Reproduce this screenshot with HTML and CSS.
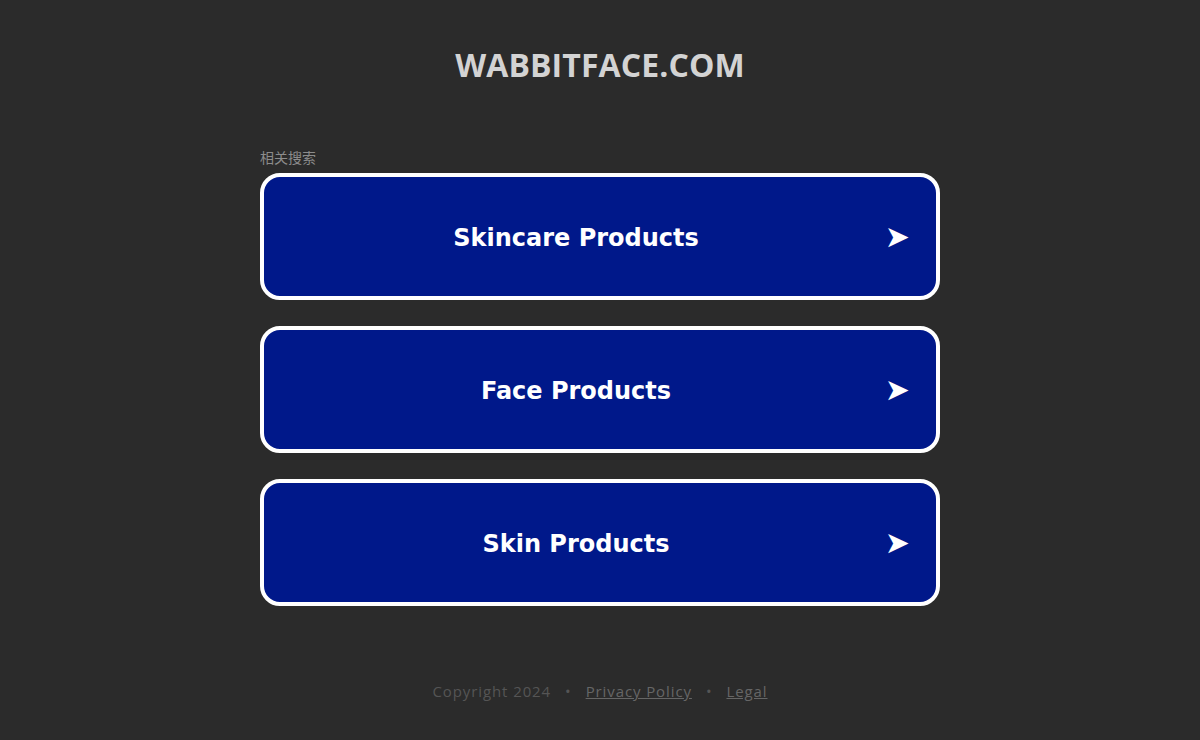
FILE: index.html
```html
<!DOCTYPE html>
<html lang="en">
<head>
<meta charset="utf-8">
<title>wabbitface.com</title>
<link rel="stylesheet" href="styles.css">
</head>
<body>
<div class="page">
  <header class="header">
    <h1 class="domain">WABBITFACE.COM</h1>
  </header>
  <main class="main">
    <div class="label">相关搜索</div>
    <div class="links">
      <a class="link" href="#"><span class="link-text">Skincare Products</span><span class="arrow">➤</span></a>
      <a class="link" href="#"><span class="link-text">Face Products</span><span class="arrow">➤</span></a>
      <a class="link" href="#"><span class="link-text">Skin Products</span><span class="arrow">➤</span></a>
    </div>
  </main>
  <footer class="footer">
    <span>Copyright 2024</span>
    <span class="dot">•</span>
    <a href="#">Privacy Policy</a>
    <span class="dot">•</span>
    <a href="#">Legal</a>
  </footer>
</div>
</body>
</html>
```
FILE: styles.css
```css
html, body {
  margin: 0;
  padding: 0;
  background: #2b2b2b;
}
.page {
  width: 1200px;
  height: 740px;
  display: flex;
  flex-direction: column;
  align-items: center;
}
.header {
  padding-top: 44px;
}
.domain {
  margin: 0;
  font-family: "Open Sans", sans-serif;
  font-weight: 700;
  font-size: 32px;
  line-height: 42px;
  color: #d3d3d3;
  letter-spacing: 0.1px;
}
.main {
  margin-top: 62px;
  width: 680px;
}
.label {
  font-family: "Noto Sans CJK SC", sans-serif;
  font-size: 14px;
  line-height: 18px;
  color: #8c8c8c;
  margin-bottom: 7px;
}
.links {
  display: flex;
  flex-direction: column;
  gap: 26px;
}
.link {
  position: relative;
  display: flex;
  align-items: center;
  justify-content: center;
  box-sizing: border-box;
  height: 127px;
  padding-top: 3px;
  border: 4px solid #ffffff;
  border-radius: 20px;
  background: #00188a;
  color: #ffffff;
  text-decoration: none;
  font-family: "DejaVu Sans", Verdana, sans-serif;
  font-weight: 700;
  font-size: 24px;
}
.link-text {
  margin-left: -48px;
}
.arrow {
  position: absolute;
  right: 26px;
  top: 50%;
  transform: translateY(-52%);
  font-size: 30px;
  font-weight: 400;
}
.footer {
  margin-top: 75px;
  font-family: "Open Sans", sans-serif;
  font-size: 15px;
  letter-spacing: 0.9px;
  color: #555555;
  display: flex;
  gap: 14px;
}
.footer a {
  color: #666666;
  text-decoration: underline;
}
.dot {
  color: #555555;
}
```
